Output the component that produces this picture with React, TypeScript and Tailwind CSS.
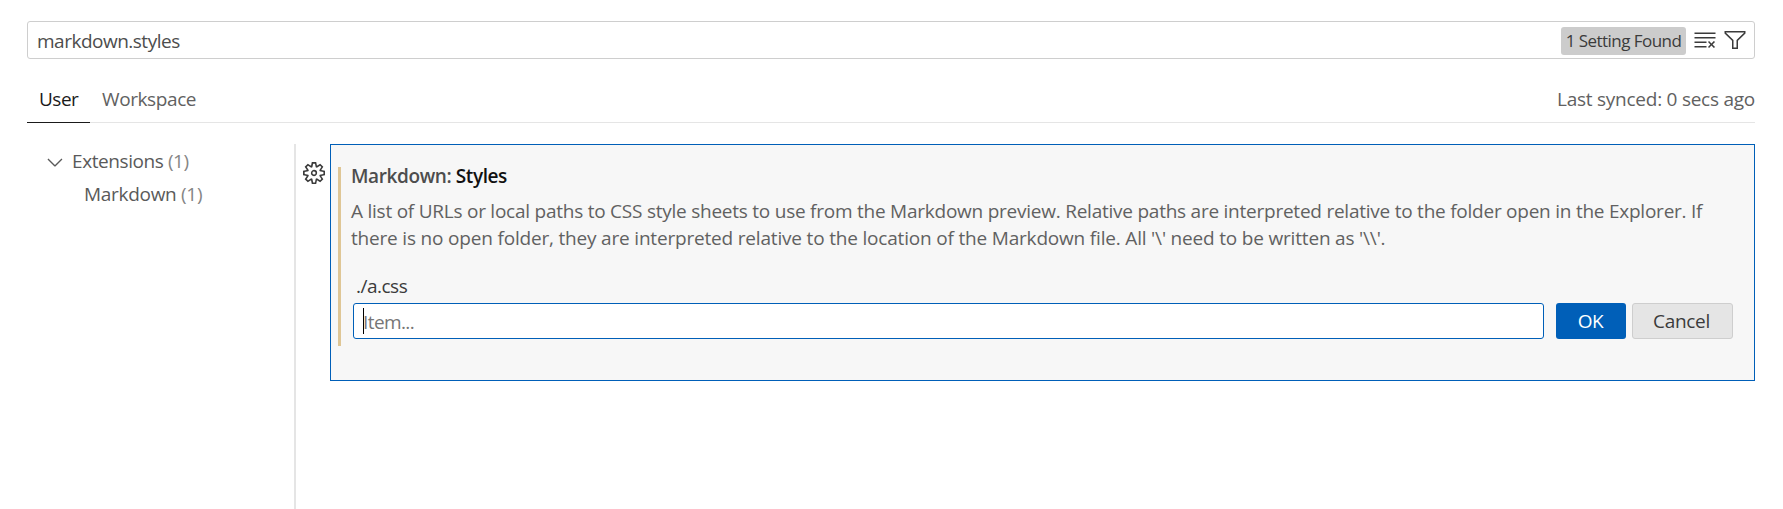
import { VscChevronDown, VscClearAll, VscFilter, VscSettingsGear } from "react-icons/vsc";

function SearchBar() {
  return (
    <div className="flex h-[38px] items-center rounded-[3px] border border-[#cecece] pl-[9px] pr-[6px]">
      <span className="grow pt-0.5 text-[19px] leading-[26px] tracking-[-0.5px] text-[#4d4d4d]">markdown.styles</span>
      <span className="mr-[7px] mt-px flex h-7 w-[125px] items-center justify-center rounded-[3px] bg-[#cccccc] pt-px text-[17px] tracking-[-0.55px] text-[#3b3b3b]">
        1 Setting Found
      </span>
      <VscClearAll className="size-6 text-[#3b3b3b]" />
      <VscFilter className="ml-[6px] mr-px size-6 text-[#3b3b3b]" />
    </div>
  );
}

function Tabs() {
  return (
    <div className="mt-[21px] flex h-[43px] border-b border-[#e5e5e5] text-[19px] leading-[39px] text-[#616161]">
      <div className="-mb-px w-[63px] border-b border-[#1a1a1a] pl-3 tracking-[-0.5px] text-[#1a1a1a]">User</div>
      <div className="ml-3 tracking-[-0.4px]">Workspace</div>
      <div className="ml-auto tracking-[-0.25px]">Last synced: 0 secs ago</div>
    </div>
  );
}

function Sidebar() {
  return (
    <nav className="w-[267px] shrink-0 pt-px text-[19px] leading-[33px] text-[#5a5a5a]">
      <div className="flex items-center pl-4">
        <VscChevronDown className="size-6" />
        <span className="ml-[5px] tracking-[-0.42px]">
          Extensions <span className="text-[#858585]">(1)</span>
        </span>
      </div>
      <div className="pl-[57px] tracking-[-0.3px]">
        Markdown <span className="text-[#858585]">(1)</span>
      </div>
    </nav>
  );
}

function SettingCard() {
  return (
    <section className="flex h-[237px] grow border border-[#005fb8] bg-[#f7f7f7] pl-[7px] pt-[22px]">
      <div className="h-[179px] w-[3px] shrink-0 bg-[#dfc695]" />
      <div className="ml-[10px] grow">
        <h2 className="h-[30px] text-[19px] font-semibold leading-[18px] tracking-[-0.4px] text-[#4d4d4d]">
          Markdown: <span className="text-[#111111]">Styles</span>
        </h2>
        <p className="mt-px whitespace-nowrap text-[19px] leading-[27px] tracking-[-0.24px] text-[#616161]">
          A list of URLs or local paths to CSS style sheets to use from the Markdown preview. Relative paths are interpreted relative to the folder open in the Explorer. If
          <br />
          <span className="tracking-[-0.185px]">
            there is no open folder, they are interpreted relative to the location of the Markdown file. All '\' need to be written as '\\'.
          </span>
        </p>
        <div className="mt-[21px] pl-[5px] text-[19px] leading-[26px] tracking-[-0.5px] text-[#3b3b3b]">./a.css</div>
        <div className="ml-[2px] mt-1 flex h-9">
          <div className="flex w-[1191px] items-center rounded-[3px] border border-[#005fb8] bg-white pl-[9px]">
            <div className="h-[26px] w-px bg-black" />
            <span className="-ml-px pt-[2px] text-[19px] tracking-[-0.6px] text-[#767676]">Item...</span>
          </div>
          <button className="ml-3 w-[70px] rounded-[3px] bg-[#005fb8] pr-px text-[19px] tracking-[-0.4px] text-white">OK</button>
          <button className="ml-[6px] w-[101px] rounded-[3px] border border-[#cecece] bg-[#e5e5e5] pr-0.5 text-[19px] tracking-[-0.3px] text-[#3b3b3b]">
            Cancel
          </button>
        </div>
      </div>
    </section>
  );
}

export default function App() {
  return (
    <main className="flex h-[509px] w-[1783px] flex-col overflow-hidden bg-white pl-[27px] pr-7 pt-[21px] font-['Open_Sans',sans-serif]">
      <SearchBar />
      <Tabs />
      <div className="mt-[21px] flex grow items-start">
        <Sidebar />
        <div className="flex grow self-stretch border-l-2 border-[#e5e5e5]">
          <div className="flex w-[34px] shrink-0 pl-[7px] pt-[18px]">
            <VscSettingsGear className="size-[22px] text-[#3b3b3b]" />
          </div>
          <SettingCard />
        </div>
      </div>
    </main>
  );
}
